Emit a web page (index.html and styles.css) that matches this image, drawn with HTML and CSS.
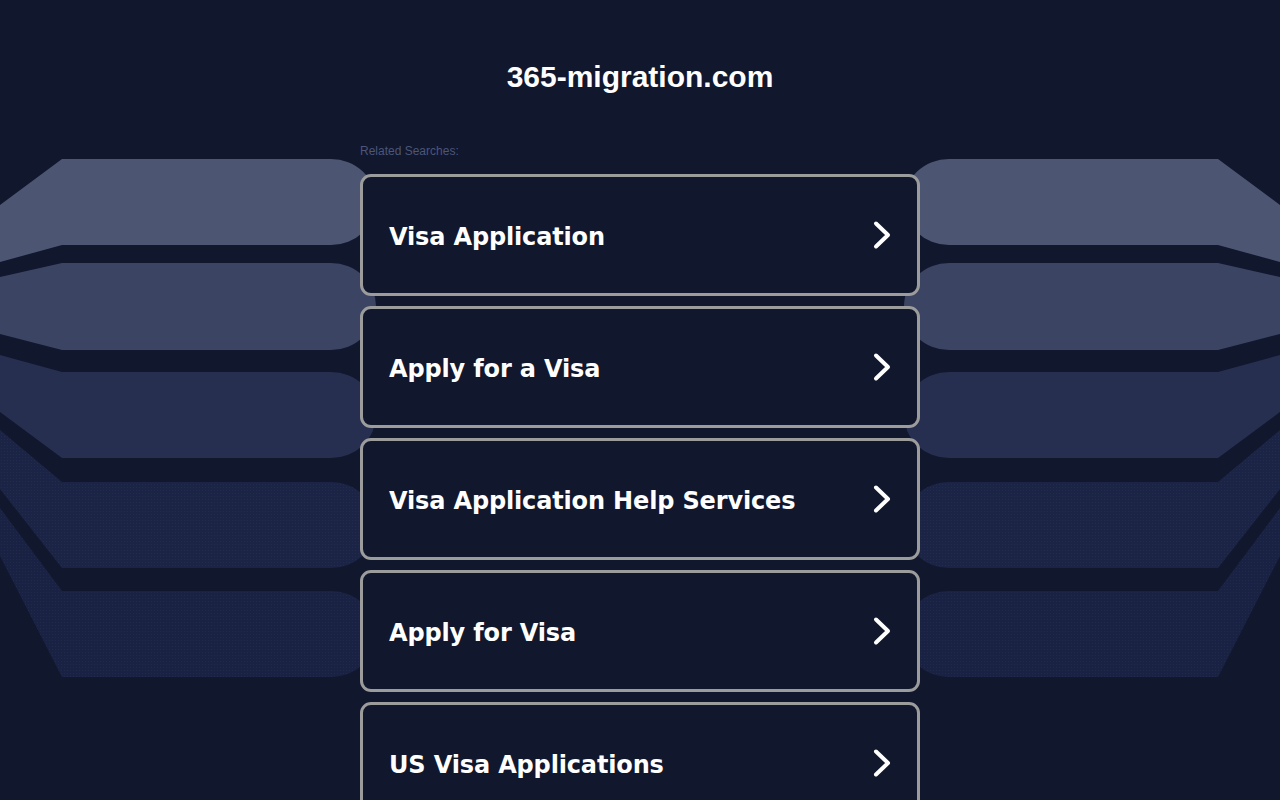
FILE: index.html
```html
<!DOCTYPE html>
<html lang="en">
<head>
<meta charset="utf-8">
<title>365-migration.com</title>
<link rel="stylesheet" href="styles.css">
</head>
<body>
<div class="page">
  <svg class="backdrop" width="1280" height="800" viewBox="0 0 1280 800" aria-hidden="true">
    <defs>
      <pattern id="dots" width="3" height="3" patternUnits="userSpaceOnUse">
        <rect width="3" height="3" fill="#1c2445"/>
        <rect x="1" y="1" width="1" height="1" fill="#222c50"/>
      </pattern>
      <pattern id="dots2" width="3" height="3" patternUnits="userSpaceOnUse">
        <rect width="3" height="3" fill="#1a2243"/>
        <rect x="1" y="1" width="1" height="1" fill="#212a4e"/>
      </pattern>
      <g id="bands">
        <path fill="#4c5673" d="M0,205 L62,159 L331,159 A45,43 0 0 1 376,202 A45,43 0 0 1 331,245 L62,245 L0,262 Z"/>
        <path fill="#3b4462" d="M0,277 L62,263 L331,263 A45,43.5 0 0 1 376,306.5 A45,43.5 0 0 1 331,350 L62,350 L0,334 Z"/>
        <path fill="#262f4f" d="M0,355 L62,372 L331,372 A45,43 0 0 1 376,415 A45,43 0 0 1 331,458 L62,458 L0,412 Z"/>
        <path fill="url(#dots)" d="M0,430 L62,482 L331,482 A45,43 0 0 1 376,525 A45,43 0 0 1 331,568 L62,568 L0,489 Z"/>
        <path fill="url(#dots2)" d="M0,508 L62,591 L331,591 A45,43 0 0 1 376,634 A45,43 0 0 1 331,677 L62,677 L0,556 Z"/>
      </g>
    </defs>
    <use href="#bands"/>
    <use href="#bands" transform="translate(1280,0) scale(-1,1)"/>
  </svg>

  <main class="content">
    <h1 class="title">365-migration.com</h1>
    <p class="related">Related Searches:</p>
    <ul class="links">
      <li><a class="link" href="#"><span>Visa Application</span><svg class="chev" width="22" height="30" viewBox="0 0 22 30"><path d="M5 3.5 L17 15 L5 26.5"/></svg></a></li>
      <li><a class="link" href="#"><span>Apply for a Visa</span><svg class="chev" width="22" height="30" viewBox="0 0 22 30"><path d="M5 3.5 L17 15 L5 26.5"/></svg></a></li>
      <li><a class="link" href="#"><span>Visa Application Help Services</span><svg class="chev" width="22" height="30" viewBox="0 0 22 30"><path d="M5 3.5 L17 15 L5 26.5"/></svg></a></li>
      <li><a class="link" href="#"><span>Apply for Visa</span><svg class="chev" width="22" height="30" viewBox="0 0 22 30"><path d="M5 3.5 L17 15 L5 26.5"/></svg></a></li>
      <li><a class="link" href="#"><span>US Visa Applications</span><svg class="chev" width="22" height="30" viewBox="0 0 22 30"><path d="M5 3.5 L17 15 L5 26.5"/></svg></a></li>
    </ul>
  </main>
</div>
</body>
</html>
```

FILE: styles.css
```css
html, body {
  margin: 0;
  padding: 0;
  background: #11172d;
  overflow: hidden;
}

.page {
  position: relative;
  width: 1280px;
  height: 800px;
  overflow: hidden;
}

.backdrop {
  position: absolute;
  left: 0;
  top: 0;
  z-index: 0;
}

.content {
  position: relative;
  z-index: 1;
  width: 560px;
  margin: 0 auto;
  padding-top: 60px;
}

.title {
  margin: 0;
  text-align: center;
  color: #ffffff;
  font: bold 30px/34px "Liberation Sans", Arial, sans-serif;
}

.related {
  margin: 50px 0 0;
  color: #4b5678;
  font: 12px/14px "Liberation Sans", Arial, sans-serif;
}

.links {
  list-style: none;
  margin: 16px 0 0;
  padding: 0;
  display: flex;
  flex-direction: column;
  gap: 10px;
}

.link {
  box-sizing: border-box;
  height: 122px;
  display: flex;
  align-items: center;
  justify-content: space-between;
  padding: 4px 24px 0 26px;
  border: 3px solid #9c9c9c;
  border-radius: 11px;
  background: #11172d;
  color: #ffffff;
  text-decoration: none;
  font: bold 24px/30px "DejaVu Sans", Verdana, sans-serif;
  letter-spacing: -0.15px;
}

.chev {
  display: block;
  flex: none;
  margin-top: -4px;
}

.chev path {
  fill: none;
  stroke: #ffffff;
  stroke-width: 4;
  stroke-linecap: round;
  stroke-linejoin: round;
}
```
